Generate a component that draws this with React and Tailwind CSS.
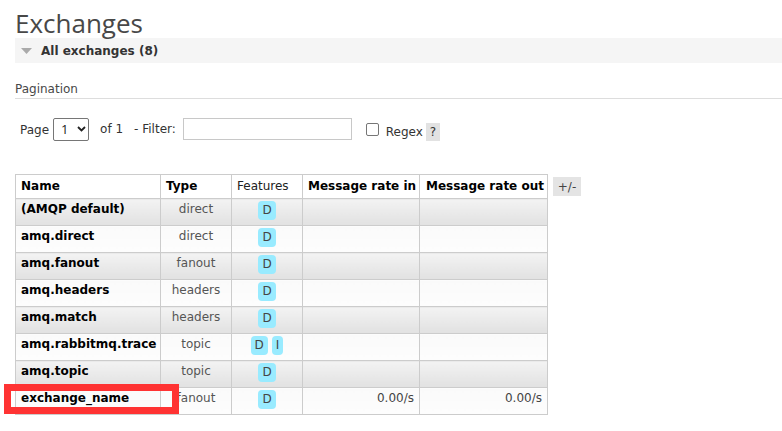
export default function App() {
  const rows = [
    { name: '(AMQP default)', type: 'direct', f: ['D'] },
    { name: 'amq.direct', type: 'direct', f: ['D'] },
    { name: 'amq.fanout', type: 'fanout', f: ['D'] },
    { name: 'amq.headers', type: 'headers', f: ['D'] },
    { name: 'amq.match', type: 'headers', f: ['D'] },
    { name: 'amq.rabbitmq.trace', type: 'topic', f: ['D', 'I'] },
    { name: 'amq.topic', type: 'topic', f: ['D'] },
    { name: 'exchange_name', type: 'fanout', f: ['D'], rin: '0.00/s', rout: '0.00/s' },
  ];
  return (
    <div className="relative w-[782px] h-[431px] overflow-hidden bg-white pl-[15px] text-[12px] text-[#444] font-['DejaVu_Sans',sans-serif]">
      <h1 className="mt-[8px] h-[30px] leading-[30px] text-[26px] font-normal text-[#484848] font-['Open_Sans',sans-serif]">
        Exchanges
      </h1>
      <div className="h-[25px] bg-[#f5f5f5] flex items-center">
        <svg width="11" height="6" viewBox="0 0 11 6" className="ml-[6px]">
          <polygon points="0,0 11,0 5.5,6" fill="#aaaaaa" />
        </svg>
        <span className="ml-[9px] font-bold text-[12px] leading-[14px] text-[#333]">All exchanges (8)</span>
      </div>
      <div className="mt-[19px] h-[17px] border-b border-[#dddddd] leading-[14px] text-[#484848]">Pagination</div>
      <div className="mt-[18px] flex items-center h-[24px] text-[#333] leading-[14px]">
        <span className="ml-[5px] mt-[1px]">Page</span>
        <div className="ml-[4px] w-[36px] h-[23px] border border-[#767676] rounded-[2px] flex items-center bg-white">
          <span className="ml-[7px] text-[13px] font-['Open_Sans',sans-serif] text-[#222]">1</span>
          <svg width="9" height="6" viewBox="0 0 9 6" className="ml-[8px]">
            <polyline points="1,1 4.5,4.5 8,1" fill="none" stroke="#222" strokeWidth="1.8" />
          </svg>
        </div>
        <span className="ml-[11px]">of 1</span>
        <span className="ml-[11px]">- Filter:</span>
        <div className="ml-[7px] w-[169px] h-[22px] border border-[#c8c8c8] bg-white" />
        <div className="ml-[14px] w-[13px] h-[13px] border border-[#767676] rounded-[2px] bg-white" />
        <span className="ml-[7px] mt-[5px]">Regex</span>
        <span className="ml-[3px] mt-[6px] w-[14px] h-[18px] bg-[#e2e2e2] flex items-center justify-center">?</span>
      </div>
      <div className="mt-[33px] flex items-start">
        <table className="border-collapse table-fixed w-[532px]">
          <colgroup>
            <col className="w-[145px]" />
            <col className="w-[71px]" />
            <col className="w-[71px]" />
            <col className="w-[117px]" />
            <col className="w-[128px]" />
          </colgroup>
          <thead>
            <tr className="bg-white">
              <th className="border border-[#cccccc] text-left pl-[5px] py-[4px] leading-[15px] font-bold text-black">Name</th>
              <th className="border border-[#cccccc] text-left pl-[5px] py-[4px] leading-[15px] font-bold text-black">Type</th>
              <th className="border border-[#cccccc] text-left pl-[5px] py-[4px] leading-[15px] font-normal text-[#222]">Features</th>
              <th className="border border-[#cccccc] text-left pl-[5px] py-[4px] leading-[15px] font-bold text-black whitespace-nowrap">Message rate in</th>
              <th className="border border-[#cccccc] text-left pl-[6px] py-[4px] leading-[15px] font-bold text-black whitespace-nowrap">Message rate out</th>
            </tr>
          </thead>
          <tbody>
            {rows.map((r, i) => {
              const bg = i % 2 === 0
                ? 'bg-gradient-to-b from-[#f3f3f3] to-[#e1e1e1]'
                : 'bg-gradient-to-b from-[#fafafa] to-[#fdfdfd]';
              const cell = 'border border-[#cccccc] align-top leading-[15px] ' + bg;
              return (
                <tr key={r.name}>
                  <td className={cell + ' pt-[3px] pl-[5px] font-bold text-black whitespace-nowrap'}>{r.name}</td>
                  <td className={cell + ' pt-[3px] text-center text-[#555]'}>{r.type}</td>
                  <td className={cell + ' pt-[2px] pb-[5px]'}>
                    <div className="flex justify-center gap-[4px]">
                      {r.f.map((x) => (
                        <span key={x} className="inline-block px-[4px] py-[2px] leading-[15px] rounded-[4px] bg-[#99ebff] text-[#444]">{x}</span>
                      ))}
                    </div>
                  </td>
                  <td className={cell + ' pt-[3px] text-right pr-[5px] text-[#444]'}>{r.rin || ''}</td>
                  <td className={cell + ' pt-[3px] text-right pr-[5px] text-[#444]'}>{r.rout || ''}</td>
                </tr>
              );
            })}
          </tbody>
        </table>
        <div className="ml-[5px] mt-[3px] w-[28px] h-[19px] bg-[#e4e4e4] flex items-center justify-center text-[#444] leading-[14px]">+/-</div>
      </div>
      <div className="absolute left-[4px] top-[384px] w-[175px] h-[30px] border-[7px] border-[#ff3333]" />
    </div>
  );
}
